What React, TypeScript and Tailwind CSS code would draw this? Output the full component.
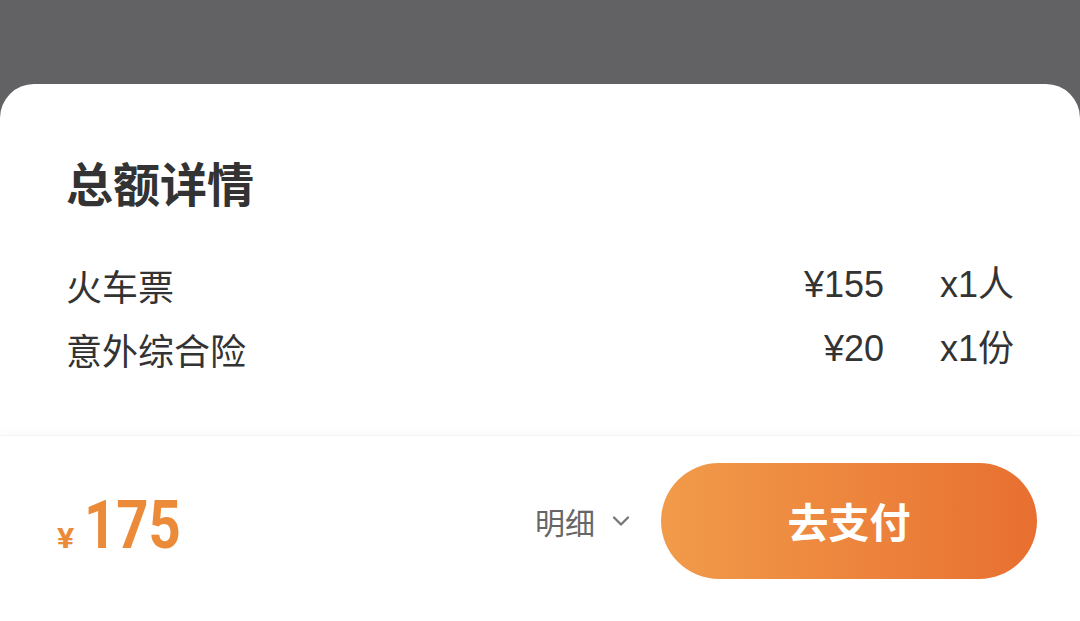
import { ChevronDown } from 'lucide-react'

const items = [
  { name: '火车票', price: 155, qty: 'x1人' },
  { name: '意外综合险', price: 20, qty: 'x1份' },
]

const cjk = { fontFamily: '"Noto Sans CJK SC", sans-serif' }
const latin = { fontFamily: '"Liberation Sans", "Noto Sans CJK SC", sans-serif' }

export default function App() {
  return (
    <div className="w-[1080px] h-[621px] bg-[#626264] flex flex-col overflow-hidden" style={cjk}>
      <div className="h-[84px] shrink-0" />
      <div className="flex-1 bg-white rounded-t-[34px] flex flex-col">
        {/* breakdown */}
        <div className="px-[66px] pt-[75px]">
          <h2 className="text-[47px] leading-[46px] font-bold text-[#333]">总额详情</h2>
          <div className="mt-[48px] flex flex-col">
            {items.map((it) => (
              <div key={it.name} className="h-[64px] flex items-center text-[36px] text-[#333]">
                <span className="flex-1">{it.name}</span>
                <span className="text-right" style={latin}>
                  ¥{it.price}
                </span>
                <span className="w-[130px] text-right" style={latin}>
                  {it.qty}
                </span>
              </div>
            ))}
          </div>
        </div>

        {/* pay bar */}
        <div className="mt-[54px] flex-1 border-t border-[#f3f3f3] shadow-[0_-6px_10px_rgba(0,0,0,0.015)] flex items-start pt-[27px] pl-[57px] pr-[43px]">
          <div className="flex-1 flex items-baseline text-[#eb8a38] h-[116px] pt-[29px]" style={{ fontFamily: 'Roboto, sans-serif' }}>
            <span className="text-[28px] font-bold mr-[12px] inline-block scale-x-[1.15] origin-left">¥</span>
            <span className="text-[67px] leading-[66px] font-bold inline-block scale-x-[0.84] origin-left">175</span>
          </div>
          <div className="h-[116px] flex items-center text-[30px] text-[#666] mr-[26px]">
            明细
            <ChevronDown className="ml-[12px] w-[28px] h-[28px] text-[#777]" strokeWidth={2} />
          </div>
          <button className="w-[376px] h-[116px] rounded-full bg-gradient-to-r from-[#f19b4a] to-[#e86f30] text-white text-[41px] font-bold">
            去支付
          </button>
        </div>
      </div>
    </div>
  )
}
